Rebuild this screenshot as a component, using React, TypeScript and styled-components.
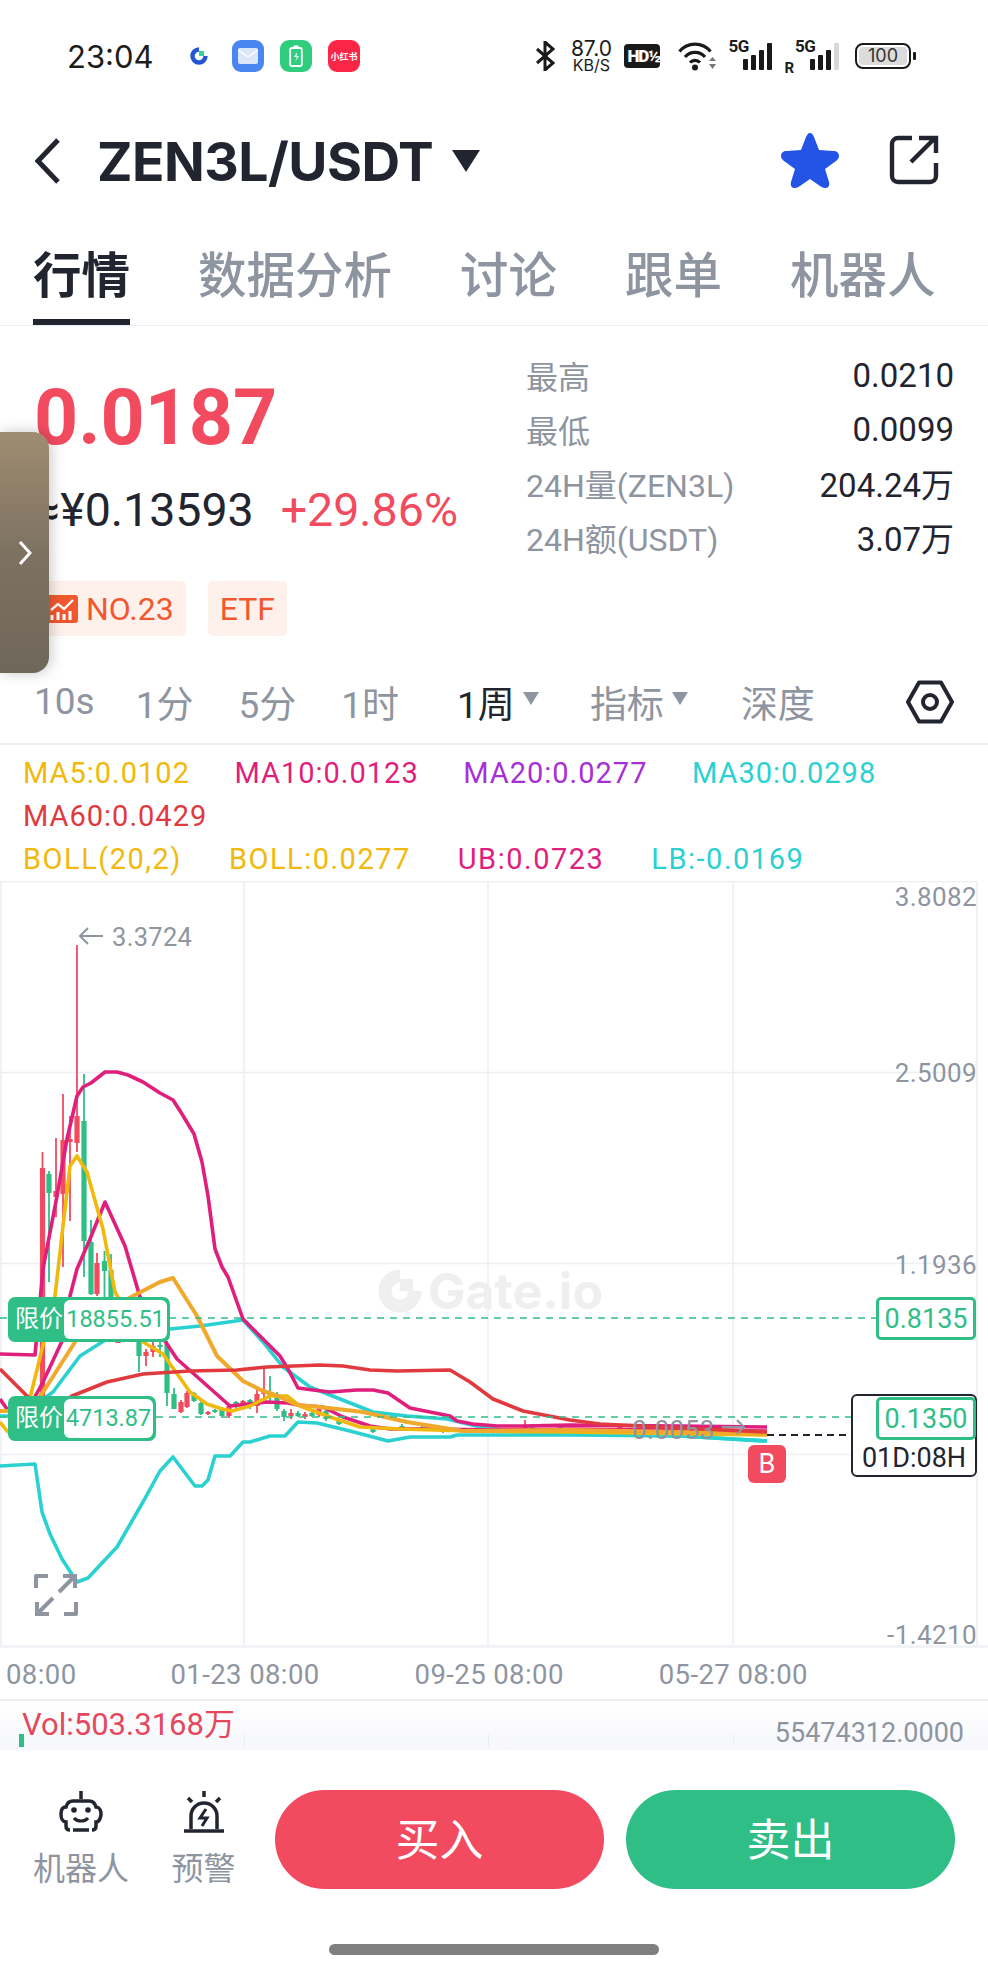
import React from 'react';
import styled, { createGlobalStyle } from 'styled-components';

const RED = '#f24b60';
const GREEN = '#30be87';
const DARK = '#22252f';
const GRAY = '#8e95a0';
const GRID = '#eceef3';
const FONT = 'Roboto, "Noto Sans CJK SC", sans-serif';

const GlobalStyle = createGlobalStyle`
  html, body {
    margin: 0;
    padding: 0;
    background: #fff;
  }
`;

const Page = styled.div`
  position: relative;
  width: 988px;
  height: 1972px;
  overflow: hidden;
  background: #fff;
  font-family: ${FONT};
  color: ${DARK};
`;

/* status bar */
const StatusBar = styled.div`
  height: 112px;
  display: flex;
  align-items: center;
  justify-content: space-between;
  padding: 0 77px 0 67px;
  box-sizing: border-box;
  color: #1c1c1c;
`;

const StatusGroup = styled.div`
  display: flex;
  align-items: center;
`;

const Clock = styled.div`
  font-family: Inter, sans-serif;
  font-size: 31px;
  width: 122px;
`;

const AppBadge = styled.div<{ $bg: string; $lead: number }>`
  width: 32px;
  height: 32px;
  margin-left: ${p => p.$lead}px;
  border-radius: 9px;
  background: ${p => p.$bg};
  display: flex;
  align-items: center;
  justify-content: center;
  color: #fff;
  font-size: 9px;
  font-weight: 700;
  white-space: nowrap;
`;

const NetSpeed = styled.div`
  width: 44px;
  margin-left: 14px;
  margin-right: 11px;
  display: flex;
  flex-direction: column;
  align-items: center;
  font-family: Inter, sans-serif;
`;

const NetValue = styled.span`
  font-size: 21px;
  line-height: 18px;
`;

const NetUnit = styled.span`
  font-size: 16px;
  line-height: 14px;
  white-space: nowrap;
`;

const HdBadge = styled.div`
  width: 36px;
  height: 24px;
  border-radius: 4px;
  background: #1a1a1a;
  color: #fff;
  font-size: 17px;
  font-weight: 900;
  line-height: 24px;
  letter-spacing: -1px;
  padding-left: 3px;
  box-sizing: border-box;
  overflow: hidden;
  margin-right: 18px;
`;

const SignalBox = styled.div<{ $gap: number }>`
  position: relative;
  width: 42px;
  height: 28px;
  margin-left: ${p => p.$gap}px;
  display: flex;
  align-items: flex-end;
  gap: 3px;
  justify-content: flex-end;
`;

const SignalLabel = styled.span`
  position: absolute;
  left: -2px;
  top: -3px;
  font-size: 17px;
  font-weight: 700;
  letter-spacing: -0.5px;
  line-height: 15px;
`;

const RoamLabel = styled.span`
  font-size: 15px;
  font-weight: 700;
  margin-left: 12px;
  align-self: flex-end;
  line-height: 14px;
  margin-bottom: -3px;
`;

const SignalBar = styled.span<{ $h: number; $off?: boolean }>`
  width: 5px;
  height: ${p => p.$h}px;
  border-radius: 1px;
  background: ${p => (p.$off ? '#d8d8d8' : '#1a1a1a')};
`;

const Battery = styled.div`
  position: relative;
  width: 56px;
  height: 26px;
  margin-left: 16px;
  border: 2px solid #1a1a1a;
  border-radius: 8px;
  box-sizing: border-box;
  padding: 2px;
  &::after {
    content: '';
    position: absolute;
    right: -7px;
    top: 7px;
    width: 3px;
    height: 8px;
    background: #1a1a1a;
    border-radius: 1px;
  }
`;

const BatteryFill = styled.div`
  height: 100%;
  background: #dcdcdc;
  border-radius: 4px;
  font-family: Inter, sans-serif;
  font-size: 18px;
  line-height: 18px;
  text-align: center;
  color: #333;
`;

/* header */
const Header = styled.div`
  height: 98px;
  display: flex;
  align-items: center;
  padding: 0 49px 0 35px;
`;

const BackIcon = styled.svg`
  width: 26px;
  height: 46px;
  margin-right: 36px;
`;

const Title = styled.div`
  font-family: Inter, sans-serif;
  font-size: 53.5px;
  font-weight: 700;
  letter-spacing: -0.5px;
  color: ${DARK};
`;

const TitleCaret = styled.span`
  width: 0;
  height: 0;
  margin-left: 19px;
  margin-top: 0;
  border-left: 14px solid transparent;
  border-right: 14px solid transparent;
  border-top: 22px solid ${DARK};
`;

const HeaderActions = styled.div`
  margin-left: auto;
  margin-top: -3px;
  display: flex;
  align-items: center;
  gap: 50px;
`;

/* main tabs */
const Tabs = styled.div`
  height: 116px;
  box-sizing: border-box;
  display: flex;
  gap: 68px;
  padding-left: 33px;
  border-bottom: 1px solid ${GRID};
`;

const Tab = styled.div<{ $active?: boolean }>`
  height: 115px;
  box-sizing: border-box;
  padding-top: 36px;
  font-size: 48.5px;
  line-height: 62px;
  font-weight: ${p => (p.$active ? 700 : 500)};
  color: ${p => (p.$active ? DARK : GRAY)};
  border-bottom: 6px solid ${p => (p.$active ? DARK : 'transparent')};
`;

/* summary */
const Summary = styled.div`
  height: 334px;
  display: flex;
  justify-content: space-between;
  padding: 0 34px;
`;

const PriceBlock = styled.div`
  padding-top: 42px;
`;

const Price = styled.div`
  height: 100px;
  font-size: 77px;
  line-height: 100px;
  font-weight: 700;
  color: ${RED};
`;

const SubPrice = styled.div`
  height: 80px;
  display: flex;
  align-items: center;
  gap: 27px;
  font-size: 46.5px;
  padding-top: 2px;
`;

const Change = styled.span`
  color: ${RED};
`;

const TagRow = styled.div`
  margin-top: 31px;
  display: flex;
  gap: 22px;
`;

const Tag = styled.div`
  height: 55px;
  padding: 0 12px;
  display: flex;
  align-items: center;
  gap: 8px;
  border-radius: 5px;
  background: #fef1ec;
  color: #f2582f;
  font-size: 32px;
`;

const Stats = styled.div`
  width: 428px;
  padding-top: 22px;
`;

const StatRow = styled.div`
  height: 54px;
  display: flex;
  align-items: center;
  justify-content: space-between;
  font-size: 32px;
`;

const StatLabel = styled.span`
  color: ${GRAY};
`;

const StatValue = styled.span`
  font-size: 33px;
  font-weight: 400;
`;

/* period bar */
const Periods = styled.div`
  height: 85px;
  box-sizing: border-box;
  display: flex;
  align-items: center;
  padding: 0 34px;
  border-bottom: 2px solid ${GRID};
  font-size: 37px;
  color: ${GRAY};
`;

const Period = styled.div<{ $active?: boolean; $lead: number }>`
  display: flex;
  align-items: center;
  margin-left: ${p => p.$lead}px;
  color: ${p => (p.$active ? DARK : GRAY)};
`;

const SmallCaret = styled.span`
  width: 0;
  height: 0;
  margin-left: 8px;
  margin-top: -6px;
  border-left: 8px solid transparent;
  border-right: 8px solid transparent;
  border-top: 13px solid ${GRAY};
`;

const HexIcon = styled.svg`
  margin-left: auto;
  width: 48px;
  height: 44px;
`;

/* indicator legend */
const Legend = styled.div`
  height: 136px;
  box-sizing: border-box;
  padding: 6px 0 0 23px;
`;

const LegendRow = styled.div<{ $gap: number; $spacing: number }>`
  height: 43px;
  display: flex;
  align-items: center;
  gap: ${p => p.$gap}px;
  letter-spacing: ${p => p.$spacing}px;
`;

const LegendItem = styled.span<{ $color: string }>`
  color: ${p => p.$color};
  font-size: 29px;
`;

/* chart */
const ChartPanel = styled.div`
  position: relative;
  height: 764px;
`;

const ChartSvg = styled.svg`
  display: block;
  width: 988px;
  height: 764px;
`;

const AxisLabel = styled.span<{ $y: number }>`
  position: absolute;
  right: 11px;
  top: ${p => p.$y - 882 - 15}px;
  line-height: 36px;
  font-size: 26px;
  letter-spacing: 0.4px;
  color: ${GRAY};
`;

const HighLabel = styled.span`
  position: absolute;
  left: 112px;
  top: 38px;
  line-height: 36px;
  font-size: 25.5px;
  letter-spacing: 0.3px;
  color: ${GRAY};
`;

const LastLabel = styled.span`
  position: absolute;
  left: 632px;
  top: 531px;
  line-height: 36px;
  font-size: 26px;
  letter-spacing: 0.5px;
  color: ${GRAY};
`;

const Watermark = styled.div`
  position: absolute;
  left: 378px;
  top: 387px;
  display: flex;
  align-items: center;
  gap: 6px;
  font-family: Inter, sans-serif;
  font-size: 50px;
  font-weight: 700;
  line-height: 46px;
  color: #efefef;
`;

const OrderTag = styled.div<{ $y: number; $w: number }>`
  position: absolute;
  left: 8px;
  top: ${p => p.$y - 882}px;
  width: ${p => p.$w}px;
  height: 45px;
  box-sizing: border-box;
  display: flex;
  align-items: stretch;
  padding: 3px 3px 3px 7px;
  border-radius: 7px;
  background: ${GREEN};
  font-size: 24px;
`;

const OrderKind = styled.span`
  width: 49px;
  color: #fff;
  line-height: 39px;
  white-space: nowrap;
`;

const OrderPrice = styled.span`
  flex: 1;
  border-radius: 6px;
  background: #fff;
  color: ${GREEN};
  text-align: center;
  line-height: 39px;
  font-size: 23.5px;
`;

const PricePill = styled.div<{ $y: number }>`
  position: absolute;
  left: 876px;
  top: ${p => p.$y - 882}px;
  width: 100px;
  height: 43px;
  box-sizing: border-box;
  border: 3px solid ${GREEN};
  border-radius: 5px;
  background: #fff;
  color: ${GREEN};
  font-size: 27px;
  line-height: 39px;
  text-align: center;
`;

const CountdownBox = styled.div`
  position: absolute;
  left: 851px;
  top: 513px;
  width: 126px;
  height: 83px;
  box-sizing: border-box;
  border: 2px solid ${DARK};
  border-radius: 6px;
  background: #fff;
  padding-top: 44px;
  text-align: center;
  font-size: 27px;
  line-height: 36px;
`;

const SideMark = styled.div`
  position: absolute;
  left: 748px;
  top: 564px;
  width: 38px;
  height: 38px;
  border-radius: 6px;
  background: ${RED};
  color: #fff;
  font-size: 27px;
  line-height: 38px;
  text-align: center;
  &::before {
    content: '';
    position: absolute;
    left: 14px;
    top: -4px;
    width: 10px;
    height: 10px;
    background: ${RED};
    transform: rotate(45deg);
    z-index: -1;
  }
`;

const ExpandIcon = styled.svg`
  position: absolute;
  left: 34px;
  top: 692px;
  width: 44px;
  height: 44px;
`;

/* time axis */
const TimeAxis = styled.div`
  position: relative;
  height: 56px;
  box-sizing: border-box;
  border-top: 3px solid #f2f3f6;
  border-bottom: 2px solid ${GRID};
  display: flex;
  align-items: center;
  padding: 1px 0 0 6px;
  font-size: 27.5px;
  letter-spacing: 0.4px;
  color: ${GRAY};
`;

const TimeLabel = styled.span<{ $lead: number }>`
  margin-left: ${p => p.$lead}px;
  white-space: nowrap;
`;

/* volume */
const VolPanel = styled.div`
  position: relative;
  height: 46px;
  background: linear-gradient(#fff, #f6f7fb);
  display: flex;
  justify-content: space-between;
  padding: 3px 24px 0 22px;
  overflow: hidden;
`;

const VolText = styled.span`
  font-size: 31px;
  line-height: 42px;
  color: #e5485d;
`;

const VolScale = styled.span`
  font-size: 27px;
  line-height: 58px;
  color: ${GRAY};
`;

const VolBar = styled.span`
  position: absolute;
  left: 19px;
  top: 33px;
  width: 5px;
  height: 13px;
  background: ${GREEN};
`;

const VolGrid = styled.span<{ $x: number }>`
  position: absolute;
  left: ${p => p.$x}px;
  top: 33px;
  width: 1px;
  height: 13px;
  background: ${GRID};
`;

/* trade bar */
const BottomBar = styled.div`
  height: 224px;
  box-sizing: border-box;
  padding-top: 40px;
  display: flex;
  flex-direction: column;
`;

const BottomRow = styled.div`
  display: flex;
  padding-left: 34px;
`;

const ToolItem = styled.div<{ $w: number; $lead: number }>`
  width: ${p => p.$w}px;
  margin-left: ${p => p.$lead}px;
  display: flex;
  flex-direction: column;
  align-items: center;
  font-size: 32px;
  line-height: 40px;
  color: ${GRAY};
  white-space: nowrap;
`;

const ToolIcon = styled.svg`
  width: 48px;
  height: 48px;
  margin-bottom: 11px;
`;

const TradeButton = styled.div<{ $bg: string; $lead: number }>`
  width: 329px;
  height: 99px;
  margin-left: ${p => p.$lead}px;
  border-radius: 50px;
  background: ${p => p.$bg};
  color: #fff;
  font-size: 44px;
  line-height: 102px;
  text-align: center;
`;

const HomeBar = styled.div`
  width: 330px;
  height: 11px;
  margin: 55px auto 0;
  border-radius: 6px;
  background: #808080;
`;

/* side drawer handle */
const Drawer = styled.div`
  position: absolute;
  left: 0;
  top: 432px;
  width: 49px;
  height: 241px;
  border-radius: 0 16px 16px 0;
  background: linear-gradient(#a08c72, #7d7261 50%, #6f675b);
  box-shadow: 2px 0 14px rgba(0, 0, 0, 0.22);
  display: flex;
  align-items: center;
  justify-content: center;
`;

type Candle = [number, number, number, number, number, 'r' | 'g'];

// x, wick top, wick bottom, body top, body bottom
const candles: Candle[] = [
  [42.5, 1153, 1400, 1169, 1400, 'r'],
  [49, 1172, 1283, 1175, 1194, 'g'],
  [56, 1139, 1218, 1192, 1198, 'r'],
  [63, 1095, 1268, 1141, 1195, 'r'],
  [70, 1117, 1222, 1140, 1143, 'r'],
  [77, 946, 1153, 1117, 1144, 'r'],
  [84, 1075, 1278, 1122, 1242, 'g'],
  [91, 1221, 1296, 1243, 1295, 'g'],
  [97, 1254, 1297, 1264, 1295, 'r'],
  [104.5, 1252, 1300, 1262, 1272, 'g'],
  [111, 1255, 1300, 1271, 1300, 'g'],
  [118, 1340, 1344, 1342, 1344, 'r'],
  [139, 1342, 1373, 1342, 1357, 'g'],
  [146, 1350, 1367, 1353, 1357, 'r'],
  [153, 1343, 1358, 1347, 1353, 'r'],
  [160, 1343, 1358, 1346, 1348, 'g'],
  [167, 1342, 1407, 1345, 1394, 'g'],
  [174, 1389, 1410, 1395, 1410, 'g'],
  [181, 1401, 1414, 1403, 1413, 'r'],
  [187, 1392, 1409, 1394, 1408, 'r'],
  [194, 1393, 1403, 1394, 1402, 'g'],
  [201, 1400, 1416, 1404, 1415, 'g'],
  [208, 1412, 1416, 1413, 1415, 'r'],
  [215, 1410, 1414, 1411, 1413, 'g'],
  [222, 1408, 1418, 1410, 1417, 'g'],
  [229, 1405, 1419, 1407, 1417, 'r'],
  [236, 1402, 1410, 1403, 1405, 'g'],
  [243, 1401, 1408, 1402, 1404, 'r'],
  [250, 1400, 1410, 1401, 1408, 'g'],
  [257, 1387, 1414, 1395, 1407, 'r'],
  [264, 1369, 1400, 1392, 1395, 'r'],
  [270, 1377, 1402, 1393, 1397, 'g'],
  [277, 1393, 1412, 1395, 1410, 'g'],
  [284, 1410, 1422, 1412, 1418, 'g'],
  [291, 1410, 1420, 1414, 1417, 'r'],
  [298, 1412, 1418, 1414, 1417, 'g'],
  [305, 1413, 1420, 1415, 1418, 'r'],
  [312, 1412, 1418, 1414, 1417, 'g'],
  [319, 1408, 1418, 1410, 1416, 'r'],
  [326, 1410, 1422, 1412, 1420, 'g'],
  [339, 1420, 1426, 1422, 1425, 'g'],
  [373, 1426, 1434, 1428, 1433, 'g'],
  [402, 1425, 1431, 1427, 1430, 'g'],
  [422, 1424, 1431, 1428, 1430, 'g'],
  [443, 1428, 1434, 1430, 1433, 'g'],
  [525, 1421, 1429, 1427, 1429, 'r'],
  [532, 1425, 1431, 1427, 1430, 'g'],
  [560, 1427, 1432, 1428, 1431, 'g'],
  [620, 1425, 1432, 1428, 1431, 'r'],
  [645, 1426, 1432, 1428, 1431, 'r']
];

const lines: { color: string; width: number; points: string }[] = [
  {
    color: '#2bd1d1',
    width: 3.6,
    points: '0,1417 20,1417 53,1393 80,1357 110,1338 170,1330 200,1327 243,1321 263,1343 283,1368 310,1388 340,1400 373,1413 407,1417 447,1420 480,1428 520,1433 570,1435 680,1437 767,1442'
  },
  {
    color: '#2bd1d1',
    width: 3.6,
    points: '0,1467 35,1465 42,1513 50,1535 62,1560 77,1583 88,1579 117,1548 143,1503 160,1472 173,1458 195,1487 202,1487 208,1481 215,1457 230,1457 243,1443 250,1443 270,1437 285,1437 298,1423 317,1424 350,1432 388,1442 410,1438 450,1438 457,1436 503,1436 570,1436 680,1437 767,1442'
  },
  {
    color: '#e01f7d',
    width: 3.6,
    points: '0,1355 35,1356 43,1270 57,1197 67,1140 77,1097 83,1088 91,1084 105,1073 117,1073 128,1076 143,1083 160,1094 173,1101 182,1115 194,1135 202,1163 208,1197 215,1250 222,1268 228,1278 243,1320 263,1340 280,1357 288,1370 298,1389 313,1391 330,1393 357,1391 373,1391 388,1394 410,1409 430,1413 450,1417 457,1422 473,1425 497,1427 523,1427 570,1426 680,1427 767,1428'
  },
  {
    color: '#e01f7d',
    width: 3.6,
    points: '0,1400 7,1410 20,1425 43,1383 63,1340 70,1297 77,1270 90,1240 105,1203 125,1247 140,1298 165,1342 177,1360 230,1407 267,1403 288,1404 298,1406 323,1408 343,1418 370,1427 390,1430 430,1430 497,1431 570,1430 680,1431 767,1432'
  },
  {
    color: '#f0b90b',
    width: 3.6,
    points: '0,1423 7,1432 20,1440 55,1297 63,1227 70,1167 77,1157 87,1173 103,1230 115,1293 143,1343 163,1355 190,1393 207,1405 222,1410 232,1412 250,1407 270,1397 287,1397 300,1407 330,1418 360,1428 400,1430 470,1432 570,1433 767,1436'
  },
  {
    color: '#f0a92b',
    width: 4,
    points: '0,1412 8,1412 30,1412 45,1390 77,1340 110,1310 133,1297 160,1283 173,1279 197,1317 217,1357 243,1382 263,1392 273,1395 297,1406 320,1408 363,1413 407,1423 463,1432 570,1431 680,1433 767,1435'
  },
  {
    color: '#e03a3e',
    width: 3.6,
    points: '0,1370 27,1397 50,1414 72,1397 107,1383 143,1375 190,1372 237,1371 267,1368 320,1366 343,1367 370,1371 397,1372 450,1371 470,1383 493,1400 523,1412 570,1421 600,1425 680,1429 767,1433'
  }
];

const times: [string, number][] = [
  ['08:00', 0],
  ['01-23 08:00', 94],
  ['09-25 08:00', 95],
  ['05-27 08:00', 95]
];

const Chart: React.FC = () => (
  <ChartSvg viewBox="0 882 988 764" fill="none">
    {[882, 1073, 1264, 1455].map(y => (
      <line key={y} x1="0" x2="977" y1={y + 0.5} y2={y + 0.5} stroke={GRID} strokeWidth="1.5" />
    ))}
    {[1, 244, 488, 733, 977].map(x => (
      <line key={x} x1={x} x2={x} y1="882" y2="1646" stroke={GRID} strokeWidth="1.5" />
    ))}
    {candles.map(([x, wt, wb, bt, bb, side]) => {
      const color = side === 'r' ? RED : GREEN;
      return (
        <g key={x}>
          <line x1={x} x2={x} y1={wt} y2={wb} stroke={color} strokeWidth="1.8" />
          <rect x={x - 2.6} y={bt} width="5.2" height={bb - bt} fill={color} />
        </g>
      );
    })}
    {lines.map(l => (
      <polyline key={l.points} points={l.points} stroke={l.color} strokeWidth={l.width} strokeLinejoin="round" />
    ))}
    <line x1="0" x2="876" y1="1319" y2="1319" stroke={GREEN} strokeWidth="1.6" strokeDasharray="7 6" />
    <line x1="0" x2="876" y1="1418" y2="1418" stroke={GREEN} strokeWidth="1.6" strokeDasharray="7 6" />
    <line x1="767" x2="851" y1="1436" y2="1436" stroke={DARK} strokeWidth="1.8" strokeDasharray="7 5" />
    <path d="M103 937H80M88 929l-8 8 8 8" stroke={GRAY} strokeWidth="2" />
    <path d="M722 1428h22M737 1421l7 7-7 7" stroke={GRAY} strokeWidth="2" />
  </ChartSvg>
);

export default function App() {
  return (
    <Page>
      <GlobalStyle />
      <StatusBar>
        <StatusGroup>
          <Clock>23:04</Clock>
          <svg width="20" height="20" viewBox="0 0 20 20" fill="none">
            <path d="M10 3.500a6.500 6.500 0 1 0 6.500 6.500" stroke="#2354d6" strokeWidth="4.400" />
            <rect x="10" y="5" width="5" height="5" fill="#2fd6a0" />
          </svg>
          <AppBadge $bg="#4a86f0" $lead={23}>
            <svg width="20" height="16" viewBox="0 0 20 16">
              <rect width="20" height="16" rx="2" fill="#dbe6fb" />
              <path d="M0 2l10 7 10-7" fill="none" stroke="#fff" strokeWidth="1.400" />
            </svg>
          </AppBadge>
          <AppBadge $bg="#2fce7f" $lead={16}>
            <svg width="14" height="22" viewBox="0 0 14 22" fill="none">
              <rect x="1.200" y="3" width="11.600" height="18" rx="1.500" stroke="#fff" strokeWidth="1.800" />
              <rect x="4.500" y="0.500" width="5" height="2.500" fill="#fff" />
              <path d="M8 7l-3 5h3l-2 5 4-6H7.500z" fill="#fff" />
            </svg>
          </AppBadge>
          <AppBadge $bg="#fb2545" $lead={16}>小红书</AppBadge>
        </StatusGroup>
        <StatusGroup>
          <svg width="20" height="30" viewBox="0 0 20 30" fill="none">
            <path d="M2 8l16 14-8 7V1l8 7L2 22" stroke="#1a1a1a" strokeWidth="3" />
          </svg>
          <NetSpeed>
            <NetValue>87.0</NetValue>
            <NetUnit>KB/S</NetUnit>
          </NetSpeed>
          <HdBadge>HD½</HdBadge>
          <svg width="38" height="30" viewBox="0 0 38 30" fill="none">
            <path d="M1.500 10.500a20 20 0 0 1 31 0M7 16a13 13 0 0 1 20 0M12 21.500a7 7 0 0 1 10 0" stroke="#1a1a1a" strokeWidth="3.200" />
            <circle cx="17" cy="26.500" r="3" fill="#1a1a1a" />
            <path d="M31 20h7l-3.500-4zM31 23h7l-3.500 5z" fill="#777" />
          </svg>
          <SignalBox $gap={14}>
            <SignalLabel>5G</SignalLabel>
            <SignalBar $h={11} />
            <SignalBar $h={15} />
            <SignalBar $h={20} />
            <SignalBar $h={27} />
          </SignalBox>
          <RoamLabel>R</RoamLabel>
          <SignalBox $gap={3}>
            <SignalLabel>5G</SignalLabel>
            <SignalBar $h={11} />
            <SignalBar $h={15} />
            <SignalBar $h={20} />
            <SignalBar $h={27} $off />
          </SignalBox>
          <Battery>
            <BatteryFill>100</BatteryFill>
          </Battery>
        </StatusGroup>
      </StatusBar>

      <Header>
        <BackIcon viewBox="0 0 26 46" fill="none">
          <path d="M23 2L3 23l20 21" stroke={DARK} strokeWidth="5" />
        </BackIcon>
        <Title>ZEN3L/USDT</Title>
        <TitleCaret />
        <HeaderActions>
          <svg width="58" height="56" viewBox="0 0 58 56">
            <path
              d="M29 1c2 0 3 2 4 4l5 13 14 1c4 0 6 2 6 5 0 2-1 3-3 5L44 37l4 13c1 4-1 6-4 6-2 0-3-1-5-2l-10-7-10 7c-2 1-3 2-5 2-3 0-5-2-4-6l4-13L3 29c-2-2-3-3-3-5 0-3 2-5 6-5l14-1 5-13c1-2 2-4 4-4z"
              fill="#2354e6"
            />
          </svg>
          <svg width="50" height="50" viewBox="0 0 50 50" fill="none">
            <path d="M23 3H9a6 6 0 0 0-6 6v32a6 6 0 0 0 6 6h32a6 6 0 0 0 6-6V28" stroke={DARK} strokeWidth="4.400" />
            <path d="M22 27L46 3M30 3h17v15" stroke={DARK} strokeWidth="4.400" />
          </svg>
        </HeaderActions>
      </Header>

      <Tabs>
        <Tab $active>行情</Tab>
        <Tab>数据分析</Tab>
        <Tab>讨论</Tab>
        <Tab>跟单</Tab>
        <Tab>机器人</Tab>
      </Tabs>

      <Summary>
        <PriceBlock>
          <Price>0.0187</Price>
          <SubPrice>
            <span>≈¥0.13593</span>
            <Change>+29.86%</Change>
          </SubPrice>
          <TagRow>
            <Tag>
              <svg width="32" height="28" viewBox="0 0 32 28">
                <rect width="32" height="28" rx="3" fill="#f2582f" />
                <path d="M5 15l7-6 6 5 9-9" fill="none" stroke="#fff" strokeWidth="2.400" />
                <path d="M6 25v-5M12 25v-8M18 25v-6M24 25v-9" stroke="#fff" strokeWidth="3" />
              </svg>
              NO.23
            </Tag>
            <Tag>ETF</Tag>
          </TagRow>
        </PriceBlock>
        <Stats>
          <StatRow>
            <StatLabel>最高</StatLabel>
            <StatValue>0.0210</StatValue>
          </StatRow>
          <StatRow>
            <StatLabel>最低</StatLabel>
            <StatValue>0.0099</StatValue>
          </StatRow>
          <StatRow>
            <StatLabel>24H量(ZEN3L)</StatLabel>
            <StatValue>204.24万</StatValue>
          </StatRow>
          <StatRow>
            <StatLabel>24H额(USDT)</StatLabel>
            <StatValue>3.07万</StatValue>
          </StatRow>
        </Stats>
      </Summary>

      <Periods>
        <Period $lead={0}>10s</Period>
        <Period $lead={41}>1分</Period>
        <Period $lead={45}>5分</Period>
        <Period $lead={45}>1时</Period>
        <Period $lead={58} $active>
          1周
          <SmallCaret />
        </Period>
        <Period $lead={51}>
          指标
          <SmallCaret />
        </Period>
        <Period $lead={53}>深度</Period>
        <HexIcon viewBox="0 0 48 44" fill="none">
          <path d="M13 2.500h22L46 22 35 41.500H13L2 22z" stroke={DARK} strokeWidth="4" strokeLinejoin="round" />
          <circle cx="24" cy="22" r="7" stroke={DARK} strokeWidth="4" />
        </HexIcon>
      </Periods>

      <Legend>
        <LegendRow $gap={44.5} $spacing={1}>
          <LegendItem $color="#f0b90b">MA5:0.0102</LegendItem>
          <LegendItem $color="#e01f7d">MA10:0.0123</LegendItem>
          <LegendItem $color="#a72fd8">MA20:0.0277</LegendItem>
          <LegendItem $color="#2bd1d1">MA30:0.0298</LegendItem>
        </LegendRow>
        <LegendRow $gap={44.5} $spacing={1}>
          <LegendItem $color="#e03a3e">MA60:0.0429</LegendItem>
        </LegendRow>
        <LegendRow $gap={47} $spacing={1.5}>
          <LegendItem $color="#f0b90b">BOLL(20,2)</LegendItem>
          <LegendItem $color="#f0b90b">BOLL:0.0277</LegendItem>
          <LegendItem $color="#e01f7d">UB:0.0723</LegendItem>
          <LegendItem $color="#2bd1d1">LB:-0.0169</LegendItem>
        </LegendRow>
      </Legend>

      <ChartPanel>
        <Watermark>
          <svg width="44" height="44" viewBox="0 0 44 44" fill="none">
            <path d="M22 7a15 15 0 1 0 15 15" stroke="#efefef" strokeWidth="13" />
            <rect x="22" y="10" width="13" height="12" fill="#efefef" />
          </svg>
          Gate.io
        </Watermark>
        <Chart />
        <AxisLabel $y={895}>3.8082</AxisLabel>
        <AxisLabel $y={1071}>2.5009</AxisLabel>
        <AxisLabel $y={1263}>1.1936</AxisLabel>
        <AxisLabel $y={1633}>-1.4210</AxisLabel>
        <HighLabel>3.3724</HighLabel>
        <LastLabel>0.0053</LastLabel>
        <OrderTag $y={1298} $w={162}>
          <OrderKind>限价</OrderKind>
          <OrderPrice>18855.51</OrderPrice>
        </OrderTag>
        <OrderTag $y={1397} $w={148}>
          <OrderKind>限价</OrderKind>
          <OrderPrice>4713.87</OrderPrice>
        </OrderTag>
        <PricePill $y={1298}>0.8135</PricePill>
        <CountdownBox>01D:08H</CountdownBox>
        <PricePill $y={1398}>0.1350</PricePill>
        <SideMark>B</SideMark>
        <ExpandIcon viewBox="0 0 44 44" fill="none">
          <path d="M2 15V3h12M42 29v12H30" stroke={GRAY} strokeWidth="4" strokeLinejoin="round" />
          <path d="M25 19L41 3M29 3h12v12M19 25L3 41M3 29v12h12" stroke={GRAY} strokeWidth="4" />
        </ExpandIcon>
      </ChartPanel>

      <TimeAxis>
        {times.map(([label, lead]) => (
          <TimeLabel key={label} $lead={lead}>
            {label}
          </TimeLabel>
        ))}
      </TimeAxis>

      <VolPanel>
        <VolText>Vol:503.3168万</VolText>
        <VolScale>55474312.0000</VolScale>
        <VolBar />
        <VolGrid $x={244} />
        <VolGrid $x={488} />
        <VolGrid $x={733} />
      </VolPanel>

      <BottomBar>
        <BottomRow>
          <ToolItem $w={94} $lead={0}>
            <ToolIcon viewBox="0 0 48 48" fill="none">
              <path d="M24 1v8" stroke={DARK} strokeWidth="3.500" />
              <path
                d="M13 38c-3 0-4-2-4-4v-4c-3 0-5-3-5-8s2-7 5-7c1-4 3-6 7-6h16c4 0 6 2 7 6 3 0 5 3 5 7s-2 8-5 8v4c0 2-1 4-4 4"
                stroke={DARK}
                strokeWidth="3.500"
                transform="translate(0 2)"
              />
              <path d="M16 40h16" stroke={DARK} strokeWidth="3.500" />
              <circle cx="17" cy="20" r="2.800" fill={DARK} />
              <circle cx="31" cy="20" r="2.800" fill={DARK} />
              <path d="M17 28c3 4 11 4 14 0" stroke={DARK} strokeWidth="3.200" />
            </ToolIcon>
            机器人
          </ToolItem>
          <ToolItem $w={63} $lead={44}>
            <ToolIcon viewBox="0 0 48 48" fill="none">
              <path d="M24 1v6M8 8l4 4M40 8l-4 4" stroke={DARK} strokeWidth="3.500" />
              <path d="M11 39V26a13 13 0 0 1 26 0v13" stroke={DARK} strokeWidth="3.500" />
              <path d="M4 41h40" stroke={DARK} strokeWidth="3.500" />
              <path d="M26 19l-6 9h7l-5 8" stroke={DARK} strokeWidth="3" />
            </ToolIcon>
            预警
          </ToolItem>
          <TradeButton $bg={RED} $lead={40}>买入</TradeButton>
          <TradeButton $bg={GREEN} $lead={22}>卖出</TradeButton>
        </BottomRow>
        <HomeBar />
      </BottomBar>

      <Drawer>
        <svg width="14" height="26" viewBox="0 0 14 26" fill="none">
          <path d="M2 2l10 11L2 24" stroke="#fff" strokeWidth="3" />
        </svg>
      </Drawer>
    </Page>
  );
}
